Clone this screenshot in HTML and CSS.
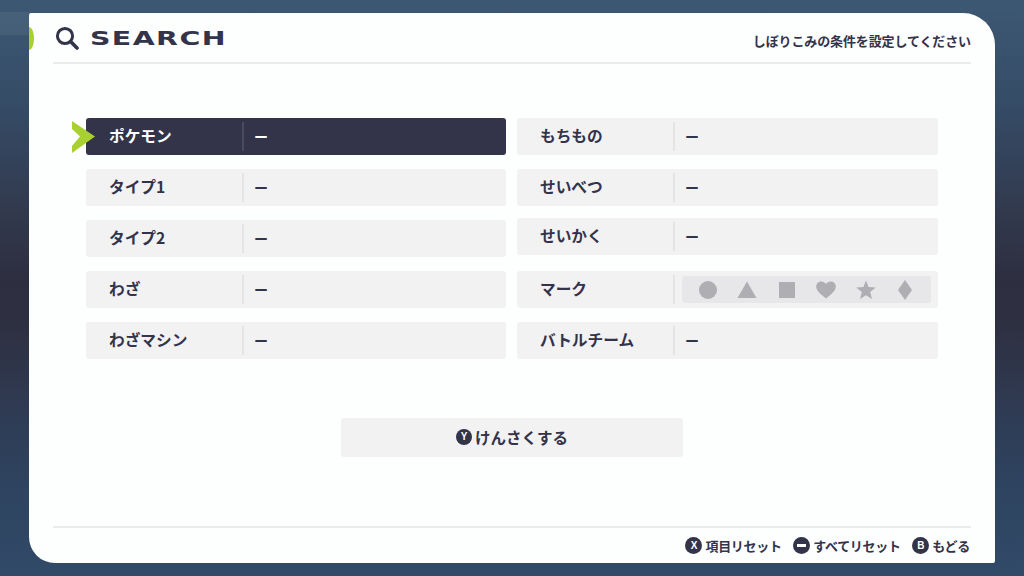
FILE: index.html
```html
<!DOCTYPE html>
<html lang="ja">

<head>
    <meta charset="UTF-8">
    <meta name="viewport" content="width=device-width, initial-scale=1.0">
    <title>Search</title>
    <link rel="stylesheet" href="styles.css">
</head>

<body>
    <span class="faixa"></span>
    <div class="painel">
        <span class="aba"></span>
        <header class="topo">
            <svg class="lupa" viewBox="0 0 24 24">
                <circle cx="10" cy="10" r="7.6" fill="none" stroke="#33334a" stroke-width="3"></circle>
                <path d="M15.6 15.6 L22 22" fill="none" stroke="#33334a" stroke-width="3.6" stroke-linecap="round"></path>
            </svg>
            <h1><span>SEARCH</span></h1>
            <p>しぼりこみの条件を設定してください</p>
        </header>

        <main class="conteudo">
            <div class="grade">
                <div class="coluna">
                    <div class="linha ativa">
                        <svg class="seta" viewBox="0 0 24 32"><path d="M0 0 L23 15.500 L0 32 L0 25 L8 15.500 L0 8 Z" fill="#a8d030"></path></svg>
                        <span class="nome">ポケモン</span><span class="valor">ー</span>
                    </div>
                    <div class="linha"><span class="nome">タイプ1</span><span class="valor">ー</span></div>
                    <div class="linha"><span class="nome">タイプ2</span><span class="valor">ー</span></div>
                    <div class="linha"><span class="nome">わざ</span><span class="valor">ー</span></div>
                    <div class="linha"><span class="nome">わざマシン</span><span class="valor">ー</span></div>
                </div>
                <div class="coluna">
                    <div class="linha"><span class="nome">もちもの</span><span class="valor">ー</span></div>
                    <div class="linha"><span class="nome">せいべつ</span><span class="valor">ー</span></div>
                    <div class="linha acima"><span class="nome">せいかく</span><span class="valor">ー</span></div>
                    <div class="linha">
                        <span class="nome">マーク</span>
                        <div class="marcas">
                            <svg viewBox="0 0 20 20"><circle cx="10" cy="10" r="9"></circle></svg>
                            <svg viewBox="0 0 20 20"><path d="M10 1.500 L19.500 18 L0.500 18 Z"></path></svg>
                            <svg viewBox="0 0 20 20"><rect x="2" y="2" width="16" height="16"></rect></svg>
                            <svg viewBox="0 0 20 20"><path d="M10 18.500 C6 15 0.200 11.500 0.200 6.500 C0.200 3.200 2.800 1.500 5.200 1.500 C7.300 1.500 9 2.500 10 4 C11 2.500 12.700 1.500 14.800 1.500 C17.200 1.500 19.800 3.200 19.800 6.500 C19.800 11.500 14 15 10 18.500 Z"></path></svg>
                            <svg viewBox="0 0 20 20"><path d="M10 .5 L12.600 7 L19.800 7.500 L14.200 12 L16 19 L10 15.200 L4 19 L5.800 12 L.2 7.500 L7.400 7 Z"></path></svg>
                            <svg viewBox="0 0 20 20"><path d="M10 0 L17 10 L10 20 L3 10 Z"></path></svg>
                        </div>
                    </div>
                    <div class="linha"><span class="nome">バトルチーム</span><span class="valor">ー</span></div>
                </div>
            </div>
            <button class="buscar"><span class="tecla">Y</span>けんさくする</button>
        </main>

        <footer class="rodape">
            <span class="acao"><span class="tecla">X</span>項目リセット</span>
            <span class="acao"><span class="tecla menos"></span>すべてリセット</span>
            <span class="acao"><span class="tecla">B</span>もどる</span>
        </footer>
    </div>
</body>

</html>
```

FILE: styles.css
```css
* {
    box-sizing: border-box;
}

html,
body {
    margin: 0;
    height: 100%;
}

body {
    position: relative;
    width: 1024px;
    height: 576px;
    overflow: hidden;
    padding: 13px 29px 13px 29px;
    font-family: "Noto Sans CJK JP", "Noto Sans", sans-serif;
    font-weight: 700;
    color: #33334a;
    background: linear-gradient(180deg, #3d5873 0%, #354c66 18%, #323a4f 36%, #2d2f40 48%, #2e3041 56%, #2f3a52 70%, #2e4460 85%, #314a68 100%);
}

.faixa {
    position: absolute;
    left: 0;
    top: 12px;
    width: 29px;
    height: 23px;
    background: rgba(255, 255, 255, .06);
}

.painel {
    position: relative;
    width: 966px;
    height: 550px;
    background: #fdfefe;
    border-radius: 2px 32px 2px 26px;
    padding: 0 24px;
    display: flex;
    flex-direction: column;
}

.aba {
    position: absolute;
    left: 0;
    top: 14px;
    width: 5px;
    height: 23px;
    background: #a8d030;
    border-radius: 0 100% 100% 0 / 0 50% 50% 0;
}

.topo {
    height: 51px;
    display: flex;
    align-items: center;
    border-bottom: 2px solid #ebebed;
    padding-left: 2px;
}

.lupa {
    width: 24px;
    height: 24px;
    margin-right: 11px;
    margin-top: 1px;
}

.topo h1 {
    margin: 0;
    font-family: "DejaVu Sans", sans-serif;
    font-size: 20px;
    font-weight: 700;
    line-height: 24px;
}

.topo h1 span {
    display: inline-block;
    letter-spacing: 1px;
    transform: scaleX(1.42);
    transform-origin: left center;
}

.topo p {
    margin: 6px 0 0 auto;
    font-size: 13px;
    letter-spacing: -0.12px;
}

.conteudo {
    flex: 1;
    display: flex;
    flex-direction: column;
    align-items: center;
    padding: 54px 33px 0;
}

.grade {
    width: 852px;
    display: grid;
    grid-template-columns: 420px 421px;
    gap: 11px;
}

.coluna {
    display: flex;
    flex-direction: column;
    gap: 14px;
}

.linha {
    position: relative;
    height: 37px;
    display: flex;
    align-items: center;
    background: #f2f2f3;
    border-radius: 3px;
    font-size: 15.7px;
}

.linha.acima {
    margin-top: -2px;
    margin-bottom: 2px;
}

.ativa {
    background: #33334a;
    color: #fff;
}

.seta {
    position: absolute;
    left: -14px;
    top: 3px;
    width: 24px;
    height: 32px;
}

.nome {
    width: 158px;
    height: 29px;
    padding-left: 23px;
    line-height: 27px;
    border-right: 2px solid #e4e4e6;
}

.ativa .nome {
    border-right-color: #4a4a5e;
}

.valor {
    padding: 0 0 2px 10px;
    font-size: 14px;
}

.marcas {
    width: 249px;
    height: 27px;
    margin-left: 7px;
    padding: 0 16px;
    display: flex;
    align-items: center;
    justify-content: space-between;
    background: #e7e7e9;
    border-radius: 3px;
}

.marcas svg {
    width: 20px;
    height: 20px;
    fill: #afafb3;
}

.buscar {
    margin-top: 59px;
    width: 342px;
    height: 39px;
    display: flex;
    align-items: center;
    justify-content: center;
    gap: 3px;
    border: 0;
    border-radius: 3px;
    background: #f2f2f3;
    color: #33334a;
    font: inherit;
    font-size: 15.5px;
    padding: 0 0 2px;
}

.tecla {
    width: 16px;
    height: 16px;
    display: inline-flex;
    align-items: center;
    justify-content: center;
    flex: none;
    background: #33334a;
    color: #fff;
    border-radius: 50%;
    font-family: "Liberation Sans", sans-serif;
    font-size: 10px;
    font-weight: 700;
}

.menos::before {
    content: '';
    width: 9px;
    height: 3px;
    background: #fff;
}

.rodape {
    height: 37px;
    display: flex;
    align-items: center;
    justify-content: flex-end;
    gap: 11.5px;
    border-top: 2px solid #ebebed;
    font-size: 13px;
    letter-spacing: -0.3px;
    padding: 0 1px 1px 0;
}

.rodape .tecla {
    width: 17px;
    height: 17px;
}

.acao {
    display: flex;
    align-items: center;
    gap: 3px;
}
```
